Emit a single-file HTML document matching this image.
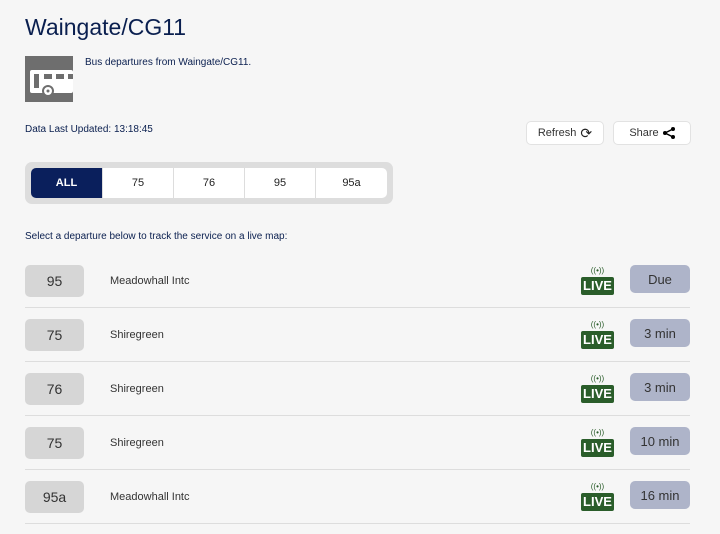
<!DOCTYPE html><html><head><style>
body{margin:0;background:#f6f6f6;font-family:"Liberation Sans",sans-serif;color:#0a1f4f;width:720px;height:534px;overflow:hidden;position:relative}
.a{position:absolute}
h1{position:absolute;left:25px;top:14px;margin:0;font-size:23px;font-weight:normal;color:#0a1f4f}
.btn{position:absolute;background:#fff;border:1px solid #e2e2e2;border-radius:5px;font-size:11px;color:#333;display:flex;align-items:center;justify-content:center;gap:4px}
.tabs{left:25px;top:162px;width:368px;height:42px;background:#ddd;border-radius:7px}
.tab{position:absolute;top:6px;height:30px;background:#fff;font-size:11px;display:flex;align-items:center;justify-content:center;color:#222}
.row{position:absolute;left:25px;width:665px;height:53px;border-bottom:1px solid #ddd}
.rt{position:absolute;left:0;top:11px;width:59px;height:32px;background:#d6d6d6;border-radius:5px;font-size:14px;display:flex;align-items:center;justify-content:center;color:#333}
.ds{position:absolute;left:85px;top:21px;font-size:11px;color:#333}
.tm{position:absolute;left:605px;top:11px;width:60px;height:28px;background:#aeb4c9;border-radius:5px;font-size:13px;display:flex;align-items:center;justify-content:center;color:#333}
.lv{position:absolute;left:556px;top:12px;width:33px;text-align:center}
.lv b{display:block;background:#2a5d2a;color:#fff;font-size:13px;border-radius:2px;height:18px;line-height:18px;margin-top:1px}
.lv i{font-style:normal;color:#2a5d2a;font-size:8px;display:block;height:10px;line-height:10px}
</style></head><body>
<h1>Waingate/CG11</h1>
<div class="a" style="left:25px;top:56px;width:48px;height:46px;background:#6e6e6e">
<svg width="48" height="46"><rect x="5" y="14" width="43" height="23" rx="2" fill="#fff"/><rect x="9" y="18" width="5" height="14" fill="#6e6e6e"/><rect x="19" y="18" width="8" height="5" fill="#6e6e6e"/><rect x="31" y="18" width="8" height="5" fill="#6e6e6e"/><rect x="43" y="18" width="5" height="5" fill="#6e6e6e"/><circle cx="23" cy="35" r="5" fill="#fff" stroke="#6e6e6e" stroke-width="2"/><circle cx="23" cy="35" r="1.5" fill="#6e6e6e"/></svg></div>
<div class="a" style="left:85px;top:57px;font-size:10px">Bus departures from Waingate/CG11.</div>
<div class="a" style="left:25px;top:124px;font-size:10px">Data Last Updated: 13:18:45</div>
<div class="btn" style="left:526px;top:121px;width:76px;height:22px">Refresh <span style="font-size:14px;color:#222">⟳</span></div>
<div class="btn" style="left:613px;top:121px;width:76px;height:22px">Share <svg width="12" height="12"><circle cx="10" cy="2" r="2"/><circle cx="2" cy="6" r="2"/><circle cx="10" cy="10" r="2"/><path d="M10 2L2 6L10 10" stroke="#000" fill="none" stroke-width="1.5"/></svg></div>
<div class="a tabs">
<div class="tab" style="left:6px;width:71px;background:#0a1f5c;color:#fff;border-radius:5px 0 0 5px;font-weight:bold">ALL</div>
<div class="tab" style="left:78px;width:70px">75</div>
<div class="tab" style="left:149px;width:70px">76</div>
<div class="tab" style="left:220px;width:70px">95</div>
<div class="tab" style="left:291px;width:71px;border-radius:0 5px 5px 0">95a</div>
</div>
<div class="a" style="left:25px;top:231px;font-size:10px">Select a departure below to track the service on a live map:</div>
<div class="row" style="top:254px"><div class="rt">95</div><div class="ds">Meadowhall Intc</div><div class="lv"><i>((•))</i><b>LIVE</b></div><div class="tm">Due</div></div>
<div class="row" style="top:308px"><div class="rt">75</div><div class="ds">Shiregreen</div><div class="lv"><i>((•))</i><b>LIVE</b></div><div class="tm">3 min</div></div>
<div class="row" style="top:362px"><div class="rt">76</div><div class="ds">Shiregreen</div><div class="lv"><i>((•))</i><b>LIVE</b></div><div class="tm">3 min</div></div>
<div class="row" style="top:416px"><div class="rt">75</div><div class="ds">Shiregreen</div><div class="lv"><i>((•))</i><b>LIVE</b></div><div class="tm">10 min</div></div>
<div class="row" style="top:470px"><div class="rt">95a</div><div class="ds">Meadowhall Intc</div><div class="lv"><i>((•))</i><b>LIVE</b></div><div class="tm">16 min</div></div>
</body></html>
